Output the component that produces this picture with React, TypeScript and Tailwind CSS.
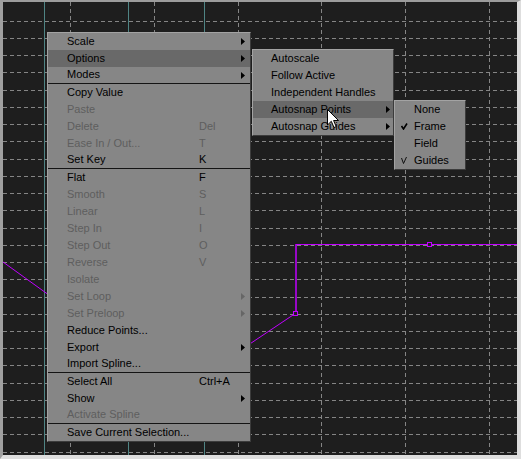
import React from "react";

type Item = { l: string; sc?: string; arrow?: boolean; dis?: boolean; sep?: boolean; hl?: boolean };

const mainItems: Item[] = [
  { l: "Scale", arrow: true },
  { l: "Options", arrow: true, hl: true },
  { l: "Modes", arrow: true, sep: true },
  { l: "Copy Value" },
  { l: "Paste", dis: true },
  { l: "Delete", sc: "Del", dis: true },
  { l: "Ease In / Out...", sc: "T", dis: true },
  { l: "Set Key", sc: "K", sep: true },
  { l: "Flat", sc: "F" },
  { l: "Smooth", sc: "S", dis: true },
  { l: "Linear", sc: "L", dis: true },
  { l: "Step In", sc: "I", dis: true },
  { l: "Step Out", sc: "O", dis: true },
  { l: "Reverse", sc: "V", dis: true },
  { l: "Isolate", dis: true },
  { l: "Set Loop", arrow: true, dis: true },
  { l: "Set Preloop", arrow: true, dis: true },
  { l: "Reduce Points..." },
  { l: "Export", arrow: true },
  { l: "Import Spline...", sep: true },
  { l: "Select All", sc: "Ctrl+A" },
  { l: "Show", arrow: true },
  { l: "Activate Spline", dis: true, sep: true },
  { l: "Save Current Selection..." },
];

const subItems: Item[] = [
  { l: "Autoscale" },
  { l: "Follow Active" },
  { l: "Independent Handles" },
  { l: "Autosnap Points", arrow: true, hl: true },
  { l: "Autosnap Guides", arrow: true },
];

function Arrow({ dis }: { dis?: boolean }) {
  return (
    <svg width="4" height="7" viewBox="0 0 4 7" className="shrink-0 mt-[1px]">
      <polygon points="0,0 4,3.5 0,7" fill={dis ? "#666666" : "#000000"} />
    </svg>
  );
}

const font = { fontFamily: '"Liberation Sans", Arial, sans-serif' };

function Grid() {
  const hs: number[] = [];
  for (let i = 0; i < 26; i++) hs.push(Math.round(20.7 + 17.24 * i) + 0.5);
  const vd = [70, 154, 238, 321, 405, 489];
  const vt = [44, 128, 204];
  return (
    <svg className="absolute left-0 top-0" width="514" height="453" viewBox="3 2 514 453">
      {hs.map((y) => (
        <line key={"h" + y} x1="3" x2="517" y1={y} y2={y} stroke="#858585" strokeWidth="1" strokeDasharray="4 3" />
      ))}
      {vd.map((x) => (
        <line key={"v" + x} x1={x + 0.5} x2={x + 0.5} y1="2" y2="455" stroke="#858585" strokeWidth="1" strokeDasharray="4 3" />
      ))}
      {vt.map((x) => (
        <line key={"t" + x} x1={x + 0.5} x2={x + 0.5} y1="2" y2="455" stroke="#4f8484" strokeWidth="1" />
      ))}
      <line x1="3" y1="262" x2="181" y2="390" stroke="#c000ff" strokeWidth="1" />
      <line x1="181" y1="390" x2="296" y2="313" stroke="#c000ff" strokeWidth="1" />
      <line x1="296" y1="314" x2="296" y2="244" stroke="#c000ff" strokeWidth="1.5" />
      <line x1="296" y1="244.5" x2="517" y2="244.5" stroke="#c000ff" strokeWidth="1" />
      <rect x="293.5" y="311.5" width="4" height="4" fill="#1e1e1e" stroke="#c000ff" strokeWidth="1" />
      <rect x="427.5" y="242.5" width="4" height="4" fill="#1e1e1e" stroke="#c000ff" strokeWidth="1" />
    </svg>
  );
}

export default function App() {
  return (
    <div
      className="relative w-[521px] h-[459px] flex border-t-2 border-l-[3px] border-r-4 border-b-4 border-t-[#9c9c9c] border-l-[#a0a0a0] border-r-[#dedede] border-b-[#dedede] text-[11px] text-black"
      style={font}
    >
      <div className="relative flex-1 bg-[#1e1e1e] overflow-hidden">
        <Grid />
      </div>

      {/* Main context menu */}
      <div className="absolute left-[44px] top-[30px] w-[204px] flex flex-col bg-[#868686] border border-t-[#a3a3a3] border-l-[#a3a3a3] border-r-[#3c3c3c] border-b-[#3c3c3c]">
        {mainItems.map((it) => (
          <div
            key={it.l}
            className={
              "h-[17px] flex items-center pl-[19px] pr-[5px] pb-[1px] " +
              (it.hl ? "bg-[#696969] " : "") +
              (it.sep ? "border-b border-b-[#141414] " : "") +
              (it.dis ? "text-[#5e5e5e]" : "text-black")
            }
          >
            <span className="w-[132px] whitespace-nowrap">{it.l}</span>
            <span className="flex-1 whitespace-nowrap">{it.sc ?? ""}</span>
            {it.arrow ? <Arrow dis={it.dis} /> : null}
          </div>
        ))}
      </div>

      {/* Options submenu */}
      <div className="absolute left-[249px] top-[47px] w-[142px] flex flex-col bg-[#868686] border border-t-[#a3a3a3] border-l-[#a3a3a3] border-r-[#3c3c3c] border-b-[#3c3c3c]">
        {subItems.map((it) => (
          <div
            key={it.l}
            className={"h-[17px] flex items-center pl-[18px] pr-[3px] pb-[1px] " + (it.hl ? "bg-[#696969]" : "")}
          >
            <span className="flex-1 whitespace-nowrap">{it.l}</span>
            {it.arrow ? <Arrow /> : null}
          </div>
        ))}
      </div>

      {/* Autosnap Points submenu */}
      <div className="absolute left-[391px] top-[98px] w-[72px] flex flex-col bg-[#868686] border border-t-[#a3a3a3] border-l-[#a3a3a3] border-r-[#3c3c3c] border-b-[#3c3c3c]">
        {[
          { l: "None", c: 0 },
          { l: "Frame", c: 1 },
          { l: "Field", c: 0 },
          { l: "Guides", c: 2 },
        ].map((it) => (
          <div key={it.l} className="h-[17px] flex items-center pl-[6px] pb-[1px]">
            <span className="w-[13px] flex items-center">
              {it.c === 1 ? (
                <svg width="7" height="7" viewBox="0 0 7 7">
                  <path d="M0.5,3 L2.5,6 L6,0.5" fill="none" stroke="#000" strokeWidth="1.6" />
                </svg>
              ) : it.c === 2 ? (
                <svg width="6" height="7" viewBox="0 0 6 7">
                  <path d="M0.5,1 L2.5,6.5 L5.5,0" fill="none" stroke="#111" strokeWidth="1" />
                </svg>
              ) : null}
            </span>
            <span className="whitespace-nowrap">{it.l}</span>
          </div>
        ))}
      </div>

      {/* Mouse cursor */}
      <svg className="absolute left-[324px] top-[107px]" width="13" height="20" viewBox="0 0 13 20">
        <path
          d="M0.5,0.5 L0.5,16 L4.3,12.3 L7,18.5 L9.2,17.6 L6.6,11.5 L11.5,11.5 Z"
          fill="#ffffff"
          stroke="#000000"
          strokeWidth="1"
        />
      </svg>
    </div>
  );
}
